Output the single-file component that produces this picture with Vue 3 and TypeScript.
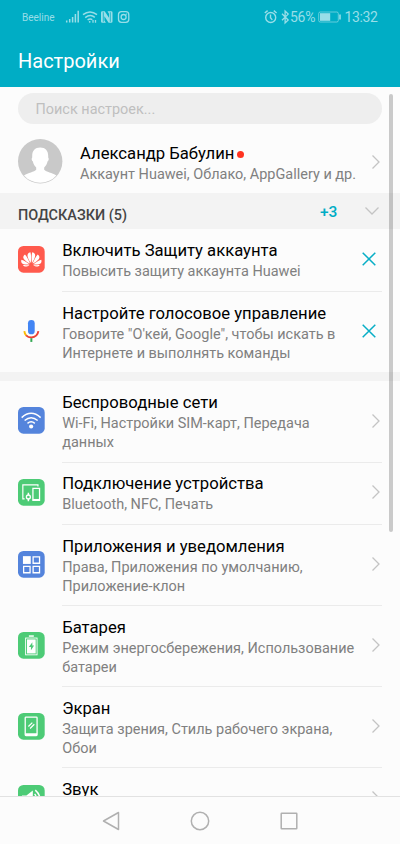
<script setup lang="ts">
interface Row {
  icon: string
  title: string
  lines: string[]
}

const hints: Row[] = [
  { icon: 'huawei', title: 'Включить Защиту аккаунта', lines: ['Повысить защиту аккаунта Huawei'] },
  {
    icon: 'mic',
    title: 'Настройте голосовое управление',
    lines: ['Говорите "О\'кей, Google", чтобы искать в', 'Интернете и выполнять команды'],
  },
]

const settings: Row[] = [
  { icon: 'wifi', title: 'Беспроводные сети', lines: ['Wi-Fi, Настройки SIM-карт, Передача', 'данных'] },
  { icon: 'devices', title: 'Подключение устройства', lines: ['Bluetooth, NFC, Печать'] },
  { icon: 'apps', title: 'Приложения и уведомления', lines: ['Права, Приложения по умолчанию,', 'Приложение-клон'] },
  { icon: 'battery', title: 'Батарея', lines: ['Режим энергосбережения, Использование', 'батареи'] },
  { icon: 'screen', title: 'Экран', lines: ['Защита зрения, Стиль рабочего экрана,', 'Обои'] },
  { icon: 'sound', title: 'Звук', lines: [''] },
]
</script>

<template>
  <div class="phone">
    <header class="header">
      <div class="status">
        <span class="carrier">Beeline</span>
        <svg class="signals" width="66" height="16" viewBox="0 0 66 16" fill="none" stroke="currentColor">
          <path d="M1.700 13.500v-2M4.700 13.500V10M7.600 13.500V8M10.400 13.500V5M13.200 13.500V1.700" stroke-width="1.500" />
          <path d="M18 5.700q7-5.400 14 0M20.200 8.600q5-3.900 9.600-.3M22.600 11q2.500-2 4.700-.3" stroke-width="1.500" />
          <circle cx="24.700" cy="12.800" r=".9" fill="currentColor" stroke="none" />
          <path d="M28 11v2.800M30.500 11v2.800" stroke-width="1.300" />
          <path d="M36 3.500q0-1.300 1.300-1.300h2.400l4.300 6.600V4.700l-1.500-2.500h3.700q1.300 0 1.300 1.300v9q0 1.300-1.300 1.300h-2.600l-4.200-6.600v4.200l1.500 2.400h-3.600q-1.300 0-1.300-1.300z" fill="currentColor" stroke="none" />
          <path d="M38.300 3.200v9.600M45.300 3.200v9.600" stroke="#00adc5" stroke-width=".8" />
          <rect x="53.500" y="2.700" width="10.300" height="10.600" rx="3" stroke-width="1.300" />
          <circle cx="58.600" cy="8" r="2.500" stroke-width="1.300" />
          <circle cx="61.400" cy="5.100" r=".7" fill="currentColor" stroke="none" />
        </svg>
        <span class="spacer"></span>
        <svg class="alarm" width="26" height="16" viewBox="0 0 26 16" fill="none" stroke="currentColor" stroke-width="1.400">
          <circle cx="6.700" cy="8.500" r="5" />
          <path d="M6.500 5.400v3.300l1.800 2.200M.8 4l2.800-2.400M12.600 4L9.800 1.600" />
          <path d="M18 4.800l6.200 6.200-3.100 3V2.100l3.100 3L18 11.300" stroke-width="1.300" />
        </svg>
        <span class="percent">56%</span>
        <svg class="cell" width="24" height="12" viewBox="0 0 24 12">
          <rect x=".7" y="1" width="19.600" height="10" rx="1.500" fill="none" stroke="currentColor" stroke-opacity=".65" />
          <rect x="2" y="2.200" width="10.200" height="7.600" fill="currentColor" />
          <path d="M21.200 3.500h1.600v5h-1.600z" fill="currentColor" />
        </svg>
        <span class="clock">13:32</span>
      </div>
      <h1 class="heading">Настройки</h1>
    </header>

    <main class="content">
      <div class="search">Поиск настроек...</div>

      <section class="profile">
        <svg class="avatar" width="45" height="45" viewBox="0 0 45 45">
          <circle cx="22.200" cy="22.200" r="22.200" fill="#c9c9c9" />
          <path
            d="M22.200 8.500c-5.200 0-8 3.200-8 8.200v1.800c-.9.900-.6 3.100.6 3.800.6 3 1.900 4.700 3.400 6.200v2.300c-2 2-8 3.200-12.200 5.600a21.400 21.400 0 0 0 32.400 0C34.200 34 28.200 32.800 26.200 30.800v-2.300c1.500-1.500 2.800-3.200 3.400-6.200 1.200-.7 1.500-2.900.6-3.800v-1.800c0-5-2.800-8.200-8-8.200Z"
            fill="#fff"
          />
        </svg>
        <div class="who">
          <div class="title name">Александр Бабулин<i class="dot"></i></div>
          <div class="sub">Аккаунт Huawei, Облако, AppGallery и др.</div>
        </div>
        <svg class="chevron" width="10" height="16" viewBox="0 0 10 16"><path d="M1.500 1.500L8 8l-6.500 6.500" /></svg>
      </section>

      <div class="band">
        <span class="band-label">ПОДСКАЗКИ (5)</span>
        <span class="more">+3</span>
        <svg class="chevron" width="16" height="10" viewBox="0 0 16 10"><path d="M1.500 1.500L8 8l6.500-6.500" /></svg>
      </div>

      <template v-for="(group, g) in [hints, settings]" :key="g">
        <div v-if="g === 1" class="gap"></div>
        <article v-for="row in group" :key="row.title" class="row">
          <svg class="icon" width="26.700" height="26.700" viewBox="0 0 27 27" fill="none" stroke="#fff" stroke-width="1.400">
            <template v-if="row.icon === 'huawei'">
              <rect width="27" height="27" rx="5.500" fill="#ff5a4d" stroke="none" />
              <g fill="#fff" stroke="none">
                <path d="M12.900 17.200C10.500 13.500 8.800 10 10 8c.6-1 1.600-1.500 2.600-1.600.8 2.600.8 6.800.3 10.800Z" />
                <path d="M14.100 17.200c2.400-3.700 4.100-7.200 2.900-9.200-.6-1-1.600-1.500-2.600-1.600-.8 2.600-.8 6.800-.3 10.800Z" />
                <path d="M12.200 17.800C8.500 16 5.400 13.500 5.300 11.300c0-1.200.8-2.200 1.800-2.800 1.800 2.200 3.700 5.700 5.100 9.300Z" />
                <path d="M14.800 17.800c3.700-1.800 6.800-4.300 6.900-6.500 0-1.200-.8-2.200-1.800-2.800-1.800 2.200-3.700 5.700-5.100 9.300Z" />
                <path d="M11.700 18.600c-3.600.5-6.800 0-7.900-1.500-.7-1-.7-2.200-.3-3.200 2.700.9 5.900 2.700 8.200 4.700Z" />
                <path d="M15.300 18.600c3.600.5 6.800 0 7.900-1.500.7-1 .7-2.200.3-3.200-2.700.9-5.900 2.700-8.200 4.700Z" />
                <path d="M11.600 19.200c-1.500 1.200-3.200 1.800-4.600 1.500-.9-.2-1.600-.7-2-1.400 2 .2 4.400.2 6.600-.1ZM15.400 19.200c1.500 1.200 3.200 1.800 4.600 1.500.9-.2 1.600-.7 2-1.400-2 .2-4.400.2-6.600-.1Z" />
              </g>
            </template>
            <template v-else-if="row.icon === 'mic'">
              <rect x="10.100" y="2" width="6.800" height="14.500" rx="3.400" fill="#4285f4" stroke="none" />
              <path d="M6.400 13.300q.2 2.600 2 4.500" stroke="#fbbc05" stroke-width="1.900" />
              <path d="M8.200 17.500q2 2.200 5.300 2.200 6.200-.5 7.100-6.400" stroke="#ea4335" stroke-width="1.900" />
              <path d="M13.500 20.500v3.700" stroke="#34a853" stroke-width="2" />
            </template>
            <template v-else-if="row.icon === 'wifi'">
              <rect width="27" height="27" rx="5.500" fill="#5484dc" stroke="none" />
              <path d="M3.700 10.700q9.600-8.600 19.200 0M6.700 13.700q6.600-5.600 13.200 0M9.600 16.500q3.700-3 7.400 0" stroke-width="1.500" />
              <circle cx="13.300" cy="19.700" r="2.100" fill="#fff" stroke="none" />
            </template>
            <template v-else-if="row.icon === 'devices'">
              <rect width="27" height="27" rx="5.500" fill="#4dcb76" stroke="none" />
              <path d="M6.700 20.200H4.900V6h15.300v1.600" stroke-width="1.200" />
              <path d="M15.100 9.500h6.700v12.200h-6.700z" stroke-width="1.300" />
              <path d="M15 20.200h7v1.700h-7z" fill="#fff" stroke="none" />
              <circle cx="10.500" cy="18.200" r="2" stroke-width="1.300" />
              <path d="M10.500 13.800v2.500M10.500 20.100v2.500" stroke-width="1.500" />
            </template>
            <template v-else-if="row.icon === 'apps'">
              <rect width="27" height="27" rx="5.500" fill="#5484dc" stroke="none" />
              <path d="M5 5.200h7.900v7.900H5z" fill="#fff" stroke="none" />
              <path d="M15.300 5.900h6.500v6.500h-6.500zM5.700 15.500h6.500V22H5.700zM15.300 15.500h6.500V22h-6.500z" stroke-width="1.300" />
            </template>
            <template v-else-if="row.icon === 'battery'">
              <rect width="27" height="27" rx="5.500" fill="#4dcb76" stroke="none" />
              <path d="M11 4.100h5" stroke-width="1.500" />
              <rect x="7.700" y="6.100" width="11.600" height="17" stroke-width=".9" />
              <path d="M9.100 7.500h8.800v14.200H9.100z" fill="#fff" stroke="none" />
              <path d="M14.500 10.300l-3.500 4.900h2.100v3.300l3.200-4.900h-1.800z" fill="#4dcb76" stroke="none" />
            </template>
            <template v-else-if="row.icon === 'screen'">
              <rect width="27" height="27" rx="5.500" fill="#4dcb76" stroke="none" />
              <rect x="7.300" y="4.100" width="12" height="18.800" rx=".8" stroke-width="1.300" />
              <path d="M7.300 20.500h12v2.300h-12z" fill="#fff" stroke="none" />
              <path d="M10.500 13.700l4-4M12.200 15.700l4.300-4.300" stroke-width="1.200" />
            </template>
            <template v-else>
              <rect width="27" height="27" rx="5.500" fill="#4dcb76" stroke="none" />
              <path d="M4 10.500h4.500L15 5.500v17L8.500 17H4z" fill="#fff" stroke="none" />
              <path d="M16.800 9q3.500 4.500 0 9M17.500 5.200q9 8 0 16.500" stroke-width="1.500" />
            </template>
          </svg>
          <div class="body">
            <div class="title">{{ row.title }}</div>
            <div v-for="line in row.lines" :key="line" class="sub">{{ line }}</div>
          </div>
          <svg v-if="g === 0" class="close" width="16" height="16" viewBox="0 0 16 16"><path d="M1.700 1.700l12.600 12.600M14.300 1.700L1.700 14.300" /></svg>
          <svg v-else class="chevron" width="10" height="16" viewBox="0 0 10 16"><path d="M1.500 1.500L8 8l-6.500 6.500" /></svg>
        </article>
      </template>
      <div class="scrollbar"></div>
    </main>

    <nav class="nav">
      <svg width="20" height="20" viewBox="0 0 20 20"><path d="M17.500 1.500v17L2.500 10z" /></svg>
      <svg width="20" height="20" viewBox="0 0 20 20"><circle cx="10" cy="10" r="8.700" /></svg>
      <svg width="20" height="20" viewBox="0 0 20 20"><rect x="2.200" y="2.200" width="15.600" height="15.600" rx=".5" /></svg>
    </nav>
  </div>
</template>

<style>
body {
  margin: 0;
  background: #fcfcfc;
}
</style>

<style scoped>
.phone {
  width: 400px;
  height: 844px;
  display: flex;
  flex-direction: column;
  overflow: hidden;
  background: #fcfcfc;
  font-family: Roboto, "Noto Sans", sans-serif;
}
.header {
  flex: none;
  height: 86.500px;
  background: #00adc5;
}
.status {
  display: flex;
  align-items: center;
  height: 34px;
  padding: 0 21.500px 0 22px;
  box-sizing: border-box;
  color: #98dee8;
}
.carrier {
  width: 43px;
  font-size: 10px;
}
.signals {
  flex: none;
}
.spacer {
  flex: 1;
}
.alarm {
  flex: none;
}
.percent {
  width: 27.500px;
  font-size: 14px;
  letter-spacing: -0.300px;
}
.cell {
  flex: none;
  margin-right: 3px;
}
.clock {
  width: 34px;
  font-size: 14px;
  letter-spacing: -0.350px;
  white-space: nowrap;
}
.heading {
  margin: 0;
  padding: 14px 0 0 18px;
  font-size: 20px;
  line-height: 26px;
  font-weight: 400;
  color: #fff;
}
.content {
  position: relative;
  flex: 1;
  min-height: 0;
  overflow: hidden;
}
.search {
  margin: 6.500px 18px 0;
  padding-left: 17.500px;
  height: 31px;
  line-height: 33px;
  border-radius: 16px;
  background: #eee;
  color: #bfbfbf;
  font-size: 14.440px;
}
.profile {
  display: flex;
  align-items: center;
  height: 69px;
  padding: 9px 19.500px 0 18px;
  box-sizing: border-box;
}
.avatar {
  flex: none;
  margin-right: 17px;
}
.who {
  flex: 1;
}
.title {
  font-size: 16.670px;
  line-height: 22px;
  color: #000;
  white-space: nowrap;
}
.sub {
  min-height: 19px;
  font-size: 14.480px;
  line-height: 19px;
  color: #808080;
  white-space: nowrap;
}
.name {
  display: flex;
  align-items: center;
}
.dot {
  width: 7px;
  height: 7px;
  margin-left: 3px;
  border-radius: 50%;
  background: #ff3320;
}
.chevron {
  flex: none;
  fill: none;
  stroke: #c4c4c4;
  stroke-width: 1.300;
}
.profile .chevron {
  margin-bottom: 8px;
}
.profile .avatar {
  margin-bottom: 8px;
}
.profile .who {
  margin-bottom: 4px;
}
.profile {
  padding-top: 14px;
}
.band {
  display: flex;
  align-items: center;
  height: 35.500px;
  padding: 0 20px 0 18px;
  background: #f3f3f3;
}
.band-label {
  flex: 1;
  padding-top: 9px;
  font-size: 14.440px;
  font-weight: 500;
  color: #444;
}
.more {
  width: 44px;
  padding-top: 2px;
  font-size: 15.500px;
  font-weight: 500;
  color: #00adc5;
}
.gap {
  height: 8.500px;
  background: #f3f3f3;
}
.row {
  position: relative;
  display: flex;
  align-items: center;
  min-height: 62.500px;
  padding: 11.500px 19.500px 9.500px 18px;
  box-sizing: border-box;
}
.row + .row::before {
  content: '';
  position: absolute;
  top: 0;
  left: 62px;
  right: 18px;
  height: 1px;
  background: #ebebeb;
}
.icon {
  flex: none;
  margin-right: 17.500px;
  margin-bottom: 2.600px;
}
.row .chevron,
.row .close {
  margin-bottom: 2.600px;
}
.body {
  flex: 1;
  min-width: 0;
}
.close {
  flex: none;
  margin-right: 4px;
  fill: none;
  stroke: #08aec6;
  stroke-width: 1.500;
}
.scrollbar {
  position: absolute;
  top: 7px;
  right: 7px;
  width: 4px;
  height: 438px;
  border-radius: 2px;
  background: rgba(0, 0, 0, 0.2);
}
.nav {
  flex: none;
  display: flex;
  justify-content: center;
  align-items: center;
  gap: 69px;
  height: 47px;
  border-top: 1px solid #e2e2e2;
  background: #fcfcfc;
}
.nav svg {
  fill: none;
  stroke: #b0b0b0;
  stroke-width: 1.500;
  stroke-linejoin: round;
}
</style>
